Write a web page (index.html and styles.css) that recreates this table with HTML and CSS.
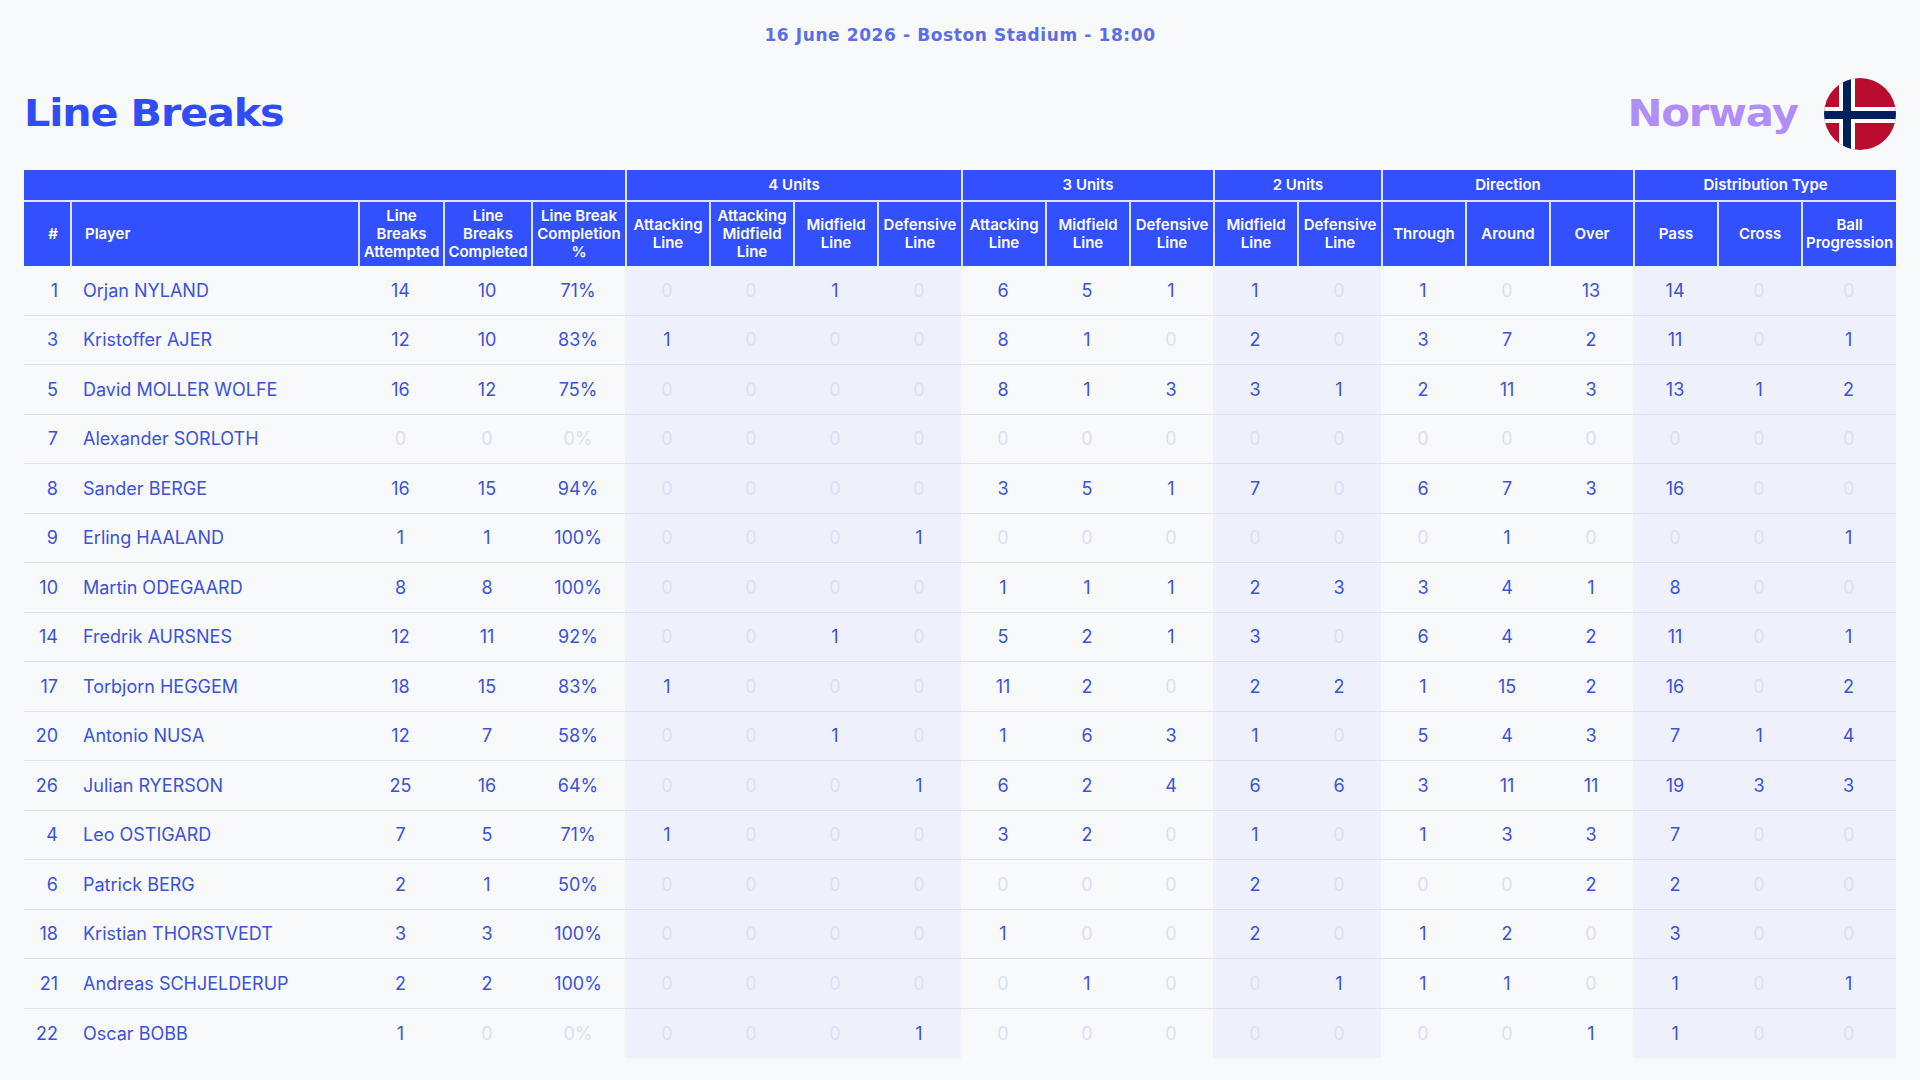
FILE: index.html
```html
<!DOCTYPE html>
<html lang="en">
<head>
<meta charset="utf-8">
<title>Line Breaks - Norway</title>
<link rel="stylesheet" href="styles.css">
</head>
<body>
<div class="page">
  <div class="date">16 June 2026 - Boston Stadium - 18:00</div>
  <div class="titlebar">
    <h1 class="title">Line Breaks</h1>
    <div class="team">
      <span class="team-name">Norway</span>
      <svg class="flag" width="72" height="72" viewBox="0 0 72 72">
        <defs><clipPath id="c"><circle cx="36" cy="36" r="36"/></clipPath></defs>
        <g clip-path="url(#c)">
          <rect width="72" height="72" fill="#BA0C2F"/>
          <rect x="15" y="0" width="16" height="72" fill="#fff"/>
          <rect x="0" y="29" width="72" height="16" fill="#fff"/>
          <rect x="19" y="0" width="8" height="72" fill="#00205B"/>
          <rect x="0" y="33" width="72" height="8" fill="#00205B"/>
        </g>
      </svg>
    </div>
  </div>
  <table class="stats">
    <colgroup>
      <col class="c-num"><col class="c-player"><col class="c-lba"><col class="c-lbc"><col class="c-pct">
      <col class="c-stat shade"><col class="c-stat shade"><col class="c-stat shade"><col class="c-stat shade">
      <col class="c-stat"><col class="c-stat"><col class="c-stat">
      <col class="c-stat shade"><col class="c-stat shade">
      <col class="c-stat"><col class="c-stat"><col class="c-stat">
      <col class="c-stat shade"><col class="c-stat shade"><col class="c-last shade">
    </colgroup>
    <thead>
      <tr class="groups">
        <th colspan="5"></th>
        <th colspan="4">4 Units</th>
        <th colspan="3">3 Units</th>
        <th colspan="2">2 Units</th>
        <th colspan="3">Direction</th>
        <th colspan="3">Distribution Type</th>
      </tr>
      <tr class="subs">
        <th class="h-num">#</th>
        <th class="h-player">Player</th>
        <th>Line<br>Breaks<br>Attempted</th>
        <th>Line<br>Breaks<br>Completed</th>
        <th>Line Break<br>Completion<br>%</th>
        <th>Attacking<br>Line</th>
        <th>Attacking<br>Midfield<br>Line</th>
        <th>Midfield<br>Line</th>
        <th>Defensive<br>Line</th>
        <th>Attacking<br>Line</th>
        <th>Midfield<br>Line</th>
        <th>Defensive<br>Line</th>
        <th>Midfield<br>Line</th>
        <th>Defensive<br>Line</th>
        <th>Through</th>
        <th>Around</th>
        <th>Over</th>
        <th>Pass</th>
        <th>Cross</th>
        <th>Ball<br>Progression</th>
      </tr>
    </thead>
    <tbody>
      <tr><td class="num">1</td><td class="player">Orjan NYLAND</td><td>14</td><td>10</td><td>71%</td><td class="z">0</td><td class="z">0</td><td>1</td><td class="z">0</td><td>6</td><td>5</td><td>1</td><td>1</td><td class="z">0</td><td>1</td><td class="z">0</td><td>13</td><td>14</td><td class="z">0</td><td class="z">0</td></tr>
      <tr><td class="num">3</td><td class="player">Kristoffer AJER</td><td>12</td><td>10</td><td>83%</td><td>1</td><td class="z">0</td><td class="z">0</td><td class="z">0</td><td>8</td><td>1</td><td class="z">0</td><td>2</td><td class="z">0</td><td>3</td><td>7</td><td>2</td><td>11</td><td class="z">0</td><td>1</td></tr>
      <tr><td class="num">5</td><td class="player">David MOLLER WOLFE</td><td>16</td><td>12</td><td>75%</td><td class="z">0</td><td class="z">0</td><td class="z">0</td><td class="z">0</td><td>8</td><td>1</td><td>3</td><td>3</td><td>1</td><td>2</td><td>11</td><td>3</td><td>13</td><td>1</td><td>2</td></tr>
      <tr><td class="num">7</td><td class="player">Alexander SORLOTH</td><td class="z">0</td><td class="z">0</td><td class="z">0%</td><td class="z">0</td><td class="z">0</td><td class="z">0</td><td class="z">0</td><td class="z">0</td><td class="z">0</td><td class="z">0</td><td class="z">0</td><td class="z">0</td><td class="z">0</td><td class="z">0</td><td class="z">0</td><td class="z">0</td><td class="z">0</td><td class="z">0</td></tr>
      <tr><td class="num">8</td><td class="player">Sander BERGE</td><td>16</td><td>15</td><td>94%</td><td class="z">0</td><td class="z">0</td><td class="z">0</td><td class="z">0</td><td>3</td><td>5</td><td>1</td><td>7</td><td class="z">0</td><td>6</td><td>7</td><td>3</td><td>16</td><td class="z">0</td><td class="z">0</td></tr>
      <tr><td class="num">9</td><td class="player">Erling HAALAND</td><td>1</td><td>1</td><td>100%</td><td class="z">0</td><td class="z">0</td><td class="z">0</td><td>1</td><td class="z">0</td><td class="z">0</td><td class="z">0</td><td class="z">0</td><td class="z">0</td><td class="z">0</td><td>1</td><td class="z">0</td><td class="z">0</td><td class="z">0</td><td>1</td></tr>
      <tr><td class="num">10</td><td class="player">Martin ODEGAARD</td><td>8</td><td>8</td><td>100%</td><td class="z">0</td><td class="z">0</td><td class="z">0</td><td class="z">0</td><td>1</td><td>1</td><td>1</td><td>2</td><td>3</td><td>3</td><td>4</td><td>1</td><td>8</td><td class="z">0</td><td class="z">0</td></tr>
      <tr><td class="num">14</td><td class="player">Fredrik AURSNES</td><td>12</td><td>11</td><td>92%</td><td class="z">0</td><td class="z">0</td><td>1</td><td class="z">0</td><td>5</td><td>2</td><td>1</td><td>3</td><td class="z">0</td><td>6</td><td>4</td><td>2</td><td>11</td><td class="z">0</td><td>1</td></tr>
      <tr><td class="num">17</td><td class="player">Torbjorn HEGGEM</td><td>18</td><td>15</td><td>83%</td><td>1</td><td class="z">0</td><td class="z">0</td><td class="z">0</td><td>11</td><td>2</td><td class="z">0</td><td>2</td><td>2</td><td>1</td><td>15</td><td>2</td><td>16</td><td class="z">0</td><td>2</td></tr>
      <tr><td class="num">20</td><td class="player">Antonio NUSA</td><td>12</td><td>7</td><td>58%</td><td class="z">0</td><td class="z">0</td><td>1</td><td class="z">0</td><td>1</td><td>6</td><td>3</td><td>1</td><td class="z">0</td><td>5</td><td>4</td><td>3</td><td>7</td><td>1</td><td>4</td></tr>
      <tr><td class="num">26</td><td class="player">Julian RYERSON</td><td>25</td><td>16</td><td>64%</td><td class="z">0</td><td class="z">0</td><td class="z">0</td><td>1</td><td>6</td><td>2</td><td>4</td><td>6</td><td>6</td><td>3</td><td>11</td><td>11</td><td>19</td><td>3</td><td>3</td></tr>
      <tr><td class="num">4</td><td class="player">Leo OSTIGARD</td><td>7</td><td>5</td><td>71%</td><td>1</td><td class="z">0</td><td class="z">0</td><td class="z">0</td><td>3</td><td>2</td><td class="z">0</td><td>1</td><td class="z">0</td><td>1</td><td>3</td><td>3</td><td>7</td><td class="z">0</td><td class="z">0</td></tr>
      <tr><td class="num">6</td><td class="player">Patrick BERG</td><td>2</td><td>1</td><td>50%</td><td class="z">0</td><td class="z">0</td><td class="z">0</td><td class="z">0</td><td class="z">0</td><td class="z">0</td><td class="z">0</td><td>2</td><td class="z">0</td><td class="z">0</td><td class="z">0</td><td>2</td><td>2</td><td class="z">0</td><td class="z">0</td></tr>
      <tr><td class="num">18</td><td class="player">Kristian THORSTVEDT</td><td>3</td><td>3</td><td>100%</td><td class="z">0</td><td class="z">0</td><td class="z">0</td><td class="z">0</td><td>1</td><td class="z">0</td><td class="z">0</td><td>2</td><td class="z">0</td><td>1</td><td>2</td><td class="z">0</td><td>3</td><td class="z">0</td><td class="z">0</td></tr>
      <tr><td class="num">21</td><td class="player">Andreas SCHJELDERUP</td><td>2</td><td>2</td><td>100%</td><td class="z">0</td><td class="z">0</td><td class="z">0</td><td class="z">0</td><td class="z">0</td><td>1</td><td class="z">0</td><td class="z">0</td><td>1</td><td>1</td><td>1</td><td class="z">0</td><td>1</td><td class="z">0</td><td>1</td></tr>
      <tr><td class="num">22</td><td class="player">Oscar BOBB</td><td>1</td><td class="z">0</td><td class="z">0%</td><td class="z">0</td><td class="z">0</td><td class="z">0</td><td>1</td><td class="z">0</td><td class="z">0</td><td class="z">0</td><td class="z">0</td><td class="z">0</td><td class="z">0</td><td class="z">0</td><td>1</td><td>1</td><td class="z">0</td><td class="z">0</td></tr>
    </tbody>
  </table>
</div>
</body>
</html>
```

FILE: styles.css
```css
html, body {
  margin: 0;
  padding: 0;
  background: #f8f9fa;
}

.page {
  width: 1872px;
  padding: 0 24px;
  font-family: "Inter", "Liberation Sans", sans-serif;
}

.date {
  text-align: center;
  font-family: "DejaVu Sans", sans-serif;
  font-weight: bold;
  font-size: 17px;
  line-height: 22px;
  letter-spacing: 0.6px;
  color: #5b6ee6;
  padding-top: 24px;
}

.titlebar {
  display: flex;
  justify-content: space-between;
  align-items: center;
  margin-top: 31px;
  height: 74px;
}

.title {
  margin: 0;
  font-family: "DejaVu Sans", sans-serif;
  font-weight: bold;
  font-size: 37px;
  letter-spacing: -1px;
  color: #2f4cf5;
  line-height: 40px;
  transform: scaleX(1.115);
  transform-origin: left center;
}

.team {
  display: flex;
  align-items: center;
  gap: 26px;
}

.team-name {
  font-family: "DejaVu Sans", sans-serif;
  font-weight: bold;
  font-size: 37px;
  letter-spacing: -1px;
  color: #b08df7;
  line-height: 40px;
  transform: scaleX(1.13);
  transform-origin: right center;
}

.flag {
  display: block;
}

.stats {
  margin-top: 19px;
  width: 1872px;
  table-layout: fixed;
  border-collapse: separate;
  border-spacing: 0;
}

.c-num { width: 46px; }
.c-player { width: 288px; }
.c-lba { width: 85px; }
.c-lbc { width: 88px; }
.c-pct { width: 94px; }
.c-stat { width: 84px; }
.c-last { width: 95px; }
.shade { background: #eef1fb; }

.stats th {
  background: #3350ff;
  color: #ffffff;
  font-weight: 600;
  font-size: 15px;
  line-height: 18px;
  text-align: center;
  padding: 0;
  border-left: 2px solid #dfe4ff;
}

.stats th:first-child {
  border-left: none;
}

.groups th {
  height: 30px;
}

.subs th {
  height: 64px;
  border-top: 2px solid #dfe4ff;
}

.subs th.h-num {
  text-align: right;
  padding-right: 12px;
}

.subs th.h-player {
  text-align: left;
  padding-left: 13px;
}

.stats td {
  height: 48.5px;
  padding: 0;
  text-align: center;
  font-size: 18px;
  color: #3b52d9;
  border-bottom: 1px solid #dde1f4;
}

.stats tbody tr:last-child td {
  border-bottom: none;
  height: 49.5px;
}

.stats td.num {
  text-align: right;
  padding-right: 12px;
}

.stats td.player {
  text-align: left;
  padding-left: 13px;
}

.stats td.z {
  color: #dbe0f3;
}
```
